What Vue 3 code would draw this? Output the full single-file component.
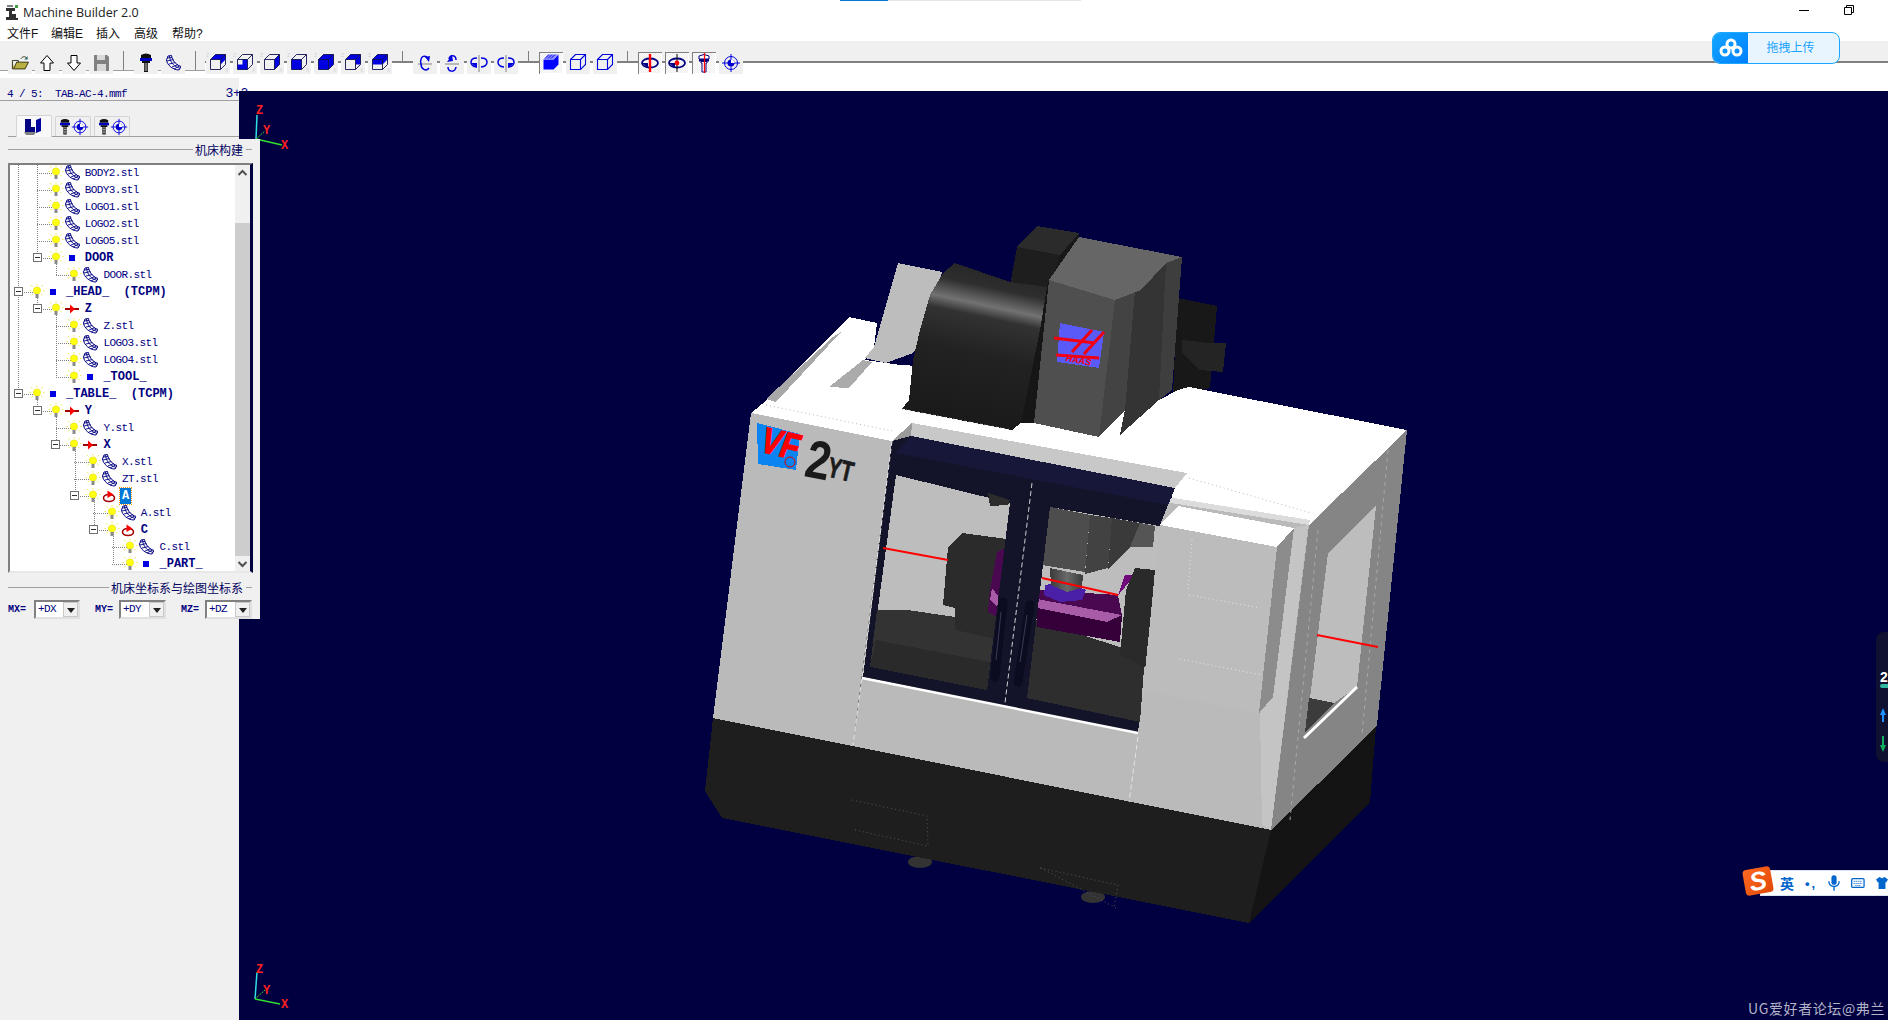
<template>
  <div class="app">
    <!-- shared icons -->
    <svg class="sprite" width="0" height="0">
      <symbol id="bulb" viewBox="0 0 16 16">
        <path d="M8 0v1.5M2 1l1.5 1.5M14 1l-1.5 1.5M.5 6.5H2M15.5 6.5H14M2.5 11l1.500-1M13.500 11L12 10" stroke="#f0e860" fill="none" />
        <circle cx="8" cy="6.500" r="3.600" fill="#ffff10" stroke="#e6d800" stroke-width=".6" />
        <rect x="6.500" y="10" width="3" height="4" fill="#8a8a8a" />
      </symbol>
      <symbol id="stl" viewBox="0 0 16 16">
        <path d="M3 1 6.500.5C7.500 6 11 10 16 11.500L14 15C8 15 2 10 1.500 5Z" fill="#fff" stroke="#000080" />
        <path d="M4.500 1C5 7 9 12 15 13.300M2 3 7 2.500M2 6 8.500 4.500M4 9 10.500 7.500M7 12 13 9.500M9 14 14.500 11" stroke="#000080" stroke-width=".9" fill="none" />
      </symbol>
      <symbol id="axis" viewBox="0 0 16 16">
        <path d="M1 8H15" stroke="#a00000" stroke-width="2" />
        <path d="M6 3.500 11 8 6 12.500Z" fill="#ff0000" />
      </symbol>
      <symbol id="rotary" viewBox="0 0 16 16">
        <ellipse cx="8" cy="10" rx="5.500" ry="3.500" fill="#fff" stroke="#a00000" stroke-width="1.600" />
        <path d="M6.500 2.500 12.500 6.500 6.500 10Z" fill="#ff0000" />
      </symbol>
      <symbol id="group" viewBox="0 0 16 16">
        <rect x="5" y="5" width="6" height="6" fill="#0000e0" />
      </symbol>

      <symbol id="open" viewBox="-2 -2 28 26">
        <path d="M3 8 3 18H18L22 10H8L5 17" fill="#b8b040" stroke="#202000" />
        <path d="M3 8H10V10M13 6C15 3 18 3 20 5" stroke="#202000" fill="none" />
        <path d="M21 3V7H17Z" fill="#206060" />
      </symbol>
      <symbol id="up" viewBox="0 0 24 22">
        <path d="M12 3.500 18.500 11H15V18.500H9V11H5.500Z" fill="#fff" stroke="#000" />
      </symbol>
      <symbol id="down" viewBox="0 0 24 22">
        <path d="M12 18.500 18.500 11H15V3.500H9V11H5.500Z" fill="#fff" stroke="#000" />
      </symbol>
      <symbol id="save" viewBox="0 0 24 22">
        <path d="M5 3H18L20 5V19H5Z" fill="#808080" />
        <rect x="8" y="3" width="8" height="5" fill="#d8d8d8" />
        <rect x="8" y="12" width="9" height="7" fill="#d8d8d8" />
      </symbol>
      <symbol id="tool" viewBox="0 0 24 22">
        <path d="M7 3Q12 0 17 3V6H7Z" fill="#101010" />
        <rect x="6" y="6" width="12" height="3" fill="#0000c0" />
        <path d="M8 9H16V11H14V20H10V11H8Z" fill="#101010" />
        <path d="M10.500 12H13.500M10.500 14H13.500M10.500 16H13.500M10.500 18H13.500" stroke="#fff" stroke-width=".8" />
      </symbol>
      <symbol id="target" viewBox="0 0 24 22">
        <circle cx="12" cy="11" r="6.500" fill="none" stroke="#0000e0" />
        <circle cx="12" cy="11" r="3.500" fill="#0000c0" />
        <path d="M12 2V20M3 11H21" stroke="#0000e0" />
        <path d="M12 7.500A3.500 3.500 0 0 1 15.500 11H12Z" fill="#fff" />
      </symbol>
      <symbol id="rot1" viewBox="0 0 24 22">
        <path d="M5 12H19" stroke="#808080" />
        <path d="M14 5C8 2 7 9 8 12 8 17 13 20 16 16" fill="none" stroke="#0000e0" stroke-width="1.500" />
        <path d="M12 5 17 4 16 10Z" fill="#0000e0" />
      </symbol>
      <symbol id="rot2" viewBox="0 0 24 22">
        <path d="M5 12H19" stroke="#808080" />
        <path d="M9 7C10 2 16 3 16 8M8 15C8 20 15 21 16 15" fill="none" stroke="#0000e0" stroke-width="1.500" />
        <path d="M12 3 7 10 13 9Z" fill="#0000e0" />
      </symbol>
      <symbol id="rot3" viewBox="0 0 24 22">
        <path d="M12 3V20" stroke="#808080" />
        <path d="M10 6C2 6 2 14 10 15M14 6C22 6 22 14 14 15" fill="none" stroke="#0000e0" stroke-width="1.500" />
        <path d="M4 11 10 11V16Z" fill="#0000e0" />
      </symbol>
      <symbol id="rot4" viewBox="0 0 24 22">
        <path d="M12 3V20" stroke="#808080" />
        <path d="M10 6C2 6 2 14 10 15M14 6C22 6 22 14 14 15" fill="none" stroke="#0000e0" stroke-width="1.500" />
        <path d="M20 11 14 11V16Z" fill="#0000e0" />
      </symbol>
      <symbol id="spin1" viewBox="0 0 24 22">
        <ellipse cx="12" cy="11" rx="8" ry="4.500" fill="none" stroke="#000080" stroke-width="1.800" />
        <path d="M4 11H10V16Z" fill="#000080" />
        <path d="M12 2V20" stroke="#ff0000" stroke-width="2.400" />
      </symbol>
      <symbol id="spin2" viewBox="0 0 24 22">
        <ellipse cx="12" cy="11" rx="8" ry="4.500" fill="none" stroke="#000080" stroke-width="1.800" />
        <path d="M4 11H10V16Z" fill="#000080" />
        <path d="M12 2V20" stroke="#000" />
        <circle cx="12" cy="11" r="2.400" fill="#ff0000" />
      </symbol>
      <symbol id="spin3" viewBox="0 0 24 22">
        <path d="M7 4Q12 1 17 4V7H7Z" fill="#fff" stroke="#000080" />
        <rect x="7" y="7" width="10" height="2.500" fill="#000080" />
        <path d="M9 9.500H15V11H14V20H10V11H9Z" fill="#fff" stroke="#000080" />
        <path d="M12.500 1V21" stroke="#ff0000" stroke-width="1.300" />
      </symbol>
      <symbol id="wire" viewBox="0 0 24 22">
        <path d="M4.500 7.500 9.500 2.500H19.500V12.500L14.500 17.500H4.500ZM4.500 7.500H14.500V17.500M14.500 7.500 19.500 2.500" fill="none" stroke="#0000e0" stroke-width="1.100" />
      </symbol>
      <symbol id="solid" viewBox="0 0 24 22">
        <path d="M4.500 7.500H14.500V17.500H4.500ZM14.500 7.500 19.500 2.500V12.500L14.500 17.500Z" fill="#0000ff" />
        <path d="M4.500 7.500 9.500 2.500H19.500L14.500 7.500Z" fill="#9090ff" />
        <path d="M6 6.500 10 2.500M9 6.500 13 2.500M12 6.500 16 2.500" stroke="#0000ff" />
      </symbol>
      <symbol v-for="c in cubes" :id="c.id" :key="c.id" viewBox="0 0 24 22">
        <path :d="c.fill" fill="#0000e0" />
        <path d="M4.500 7.500 9.500 2.500H19.500V12.500L14.500 17.500H4.500ZM4.500 7.500H14.500V17.500M14.500 7.500 19.500 2.500" fill="none" stroke="#101050" stroke-width=".9" />
      </symbol>
    </svg>

    <div class="progress"><span class="progress-on"></span></div>

    <header class="titlebar">
      <svg class="app-icon" viewBox="0 0 14 16" width="14" height="16">
        <path d="M1 4H10V7H7V10H11V14H13V16H1V13H4V7H1Z" fill="#303030" />
        <path d="M2 1H8V3H2Z" fill="#808080" />
        <rect x="10" y="1" width="3" height="3" fill="#40a040" />
      </svg>
      <span class="app-name">Machine Builder 2.0</span>
      <div class="winbtns">
        <svg width="12" height="12" viewBox="0 0 12 12"><path d="M1 6.500H11" stroke="#000" /></svg>
        <svg width="12" height="12" viewBox="0 0 12 12"><path d="M3.500 3V1.500H10.500V8.500H8.500M1.500 3.500H8.500V10.500H1.500Z" stroke="#000" fill="#fff" /></svg>
      </div>
    </header>

    <nav class="menubar">
      <span v-for="m in menus" :key="m">{{ m }}</span>
    </nav>

    <div class="toolbar">
      <template v-for="(b, i) in toolbar" :key="i">
        <span v-if="b === '|'" class="sep" :class="{ tall: i < 8 }"></span>
        <span v-else class="tbtn" :class="{ on: b.endsWith('!') }">
          <svg width="24" height="22">
            <use v-if="b === 'stl'" href="#stl" x="4" y="3" width="16" height="16" />
            <use v-else :href="'#' + b.replace('!', '')" />
            <template v-if="b.startsWith('cube')">
              <text x="0" y="5" class="mini">Z</text>
              <text x="19" y="20" class="mini">X</text>
            </template>
          </svg>
        </span>
      </template>
    </div>

    <div class="work">
      <aside class="side">
        <div class="status">
          <span>{{ statusText }}</span>
          <b class="mode">3+2</b>
        </div>
        <div class="tabs">
          <span class="tab active">
            <svg width="22" height="20" viewBox="0 0 22 20">
              <path d="M2 2H8V10H12V15H2Z" fill="#000080" />
              <path d="M13 3 18 1V14L13 16Z" fill="#0000a0" />
              <path d="M1 15H13L11 18H3Z" fill="#808080" />
            </svg>
          </span>
          <span v-for="n in 2" :key="n" class="tab">
            <svg class="tab-ico" width="20" height="20"><use href="#tool" /></svg>
            <svg class="tab-ico" width="22" height="20"><use href="#target" /></svg>
          </span>
        </div>

        <section class="panel">
          <div class="legend"><i></i><span>机床构建</span><i class="tail"></i></div>
          <div class="tree">
            <svg class="links" width="225" height="406" viewBox="10 165 225 406">
              <path :d="linkPath" fill="none" stroke="#808080" stroke-dasharray="1 1" shape-rendering="crispEdges" />
            </svg>
            <div class="rows">
              <div v-for="r in rows" :key="r.label" class="row" :class="{ bold: r.bold }" :style="{ marginLeft: (r.level * 18.7 - 1.2) + 'px' }">
                <span class="toggle"><i v-if="r.box"></i></span>
                <svg class="ico bulb" width="16" height="16"><use href="#bulb" /></svg>
                <svg class="ico" width="16" height="16"><use :href="'#' + r.icon" /></svg>
                <span class="label" :class="{ picked: r.picked }">{{ r.label }}</span>
              </div>
            </div>
            <div class="scroll">
              <span class="arrow first">
                <svg width="11" height="8" viewBox="0 0 11 8"><path d="M1.500 6 5.500 2 9.500 6" fill="none" stroke="#505050" stroke-width="2" /></svg>
              </span>
              <span class="thumb"></span>
              <span class="arrow">
                <svg width="11" height="8" viewBox="0 0 11 8"><path d="M1.500 2 5.500 6 9.500 2" fill="none" stroke="#505050" stroke-width="2" /></svg>
              </span>
            </div>
          </div>
          <div class="legend second"><i></i><span>机床坐标系与绘图坐标系</span><i class="tail"></i></div>
          <div class="combos">
            <template v-for="c in combos" :key="c.name">
              <label>{{ c.name }}</label>
              <div class="combo"><span>{{ c.value }}</span><b></b></div>
            </template>
          </div>
        </section>
      </aside>

      <main class="view">
        <svg class="scene" viewBox="239 91 1649 929" width="1649" height="929">
          <defs>
            <linearGradient id="encl" gradientUnits="userSpaceOnUse" x1="1000" y1="255" x2="965" y2="420">
              <stop offset="0" stop-color="#202020" />
              <stop offset=".2" stop-color="#2e2e2e" />
              <stop offset=".31" stop-color="#727272" />
              <stop offset=".38" stop-color="#323232" />
              <stop offset=".6" stop-color="#222222" />
              <stop offset="1" stop-color="#1a1a1a" />
            </linearGradient>
            <linearGradient id="spindle" gradientUnits="userSpaceOnUse" x1="1050" y1="0" x2="1084" y2="0">
              <stop offset="0" stop-color="#3a3a3a" />
              <stop offset=".5" stop-color="#6a6a6a" />
              <stop offset="1" stop-color="#383838" />
            </linearGradient>
          </defs>

          <g class="triad">
            <path d="M257 115 256 139" stroke="#30e0e0" stroke-width="1.500" />
            <path d="M256 139 282 145" stroke="#30e030" stroke-width="1.500" />
            <path d="M256 139 265 131" stroke="#30e030" stroke-dasharray="2 1" />
            <text x="256" y="114">Z</text><text x="263" y="134">Y</text><text x="281" y="149">X</text>
          </g>
          <g class="triad">
            <path d="M257 972 255 999" stroke="#30e0e0" stroke-width="1.500" />
            <path d="M255 999 280 1004" stroke="#30e030" stroke-width="1.500" />
            <path d="M255 999 265 990" stroke="#30e030" stroke-dasharray="2 1" />
            <text x="256" y="973">Z</text><text x="263" y="994">Y</text><text x="281" y="1008">X</text>
          </g>

          <ellipse cx="920" cy="862" rx="12" ry="6" fill="#333" />
          <ellipse cx="1093" cy="897" rx="12" ry="6" fill="#333" />

          <polygon v-for="(f, i) in faces" :key="i" :points="f[0]" :fill="f[1]" shape-rendering="crispEdges" />

          <!-- door handles and seams -->
          <path d="M1003 602 995 677M1030 605 1018 682" stroke="#0c0c20" stroke-width="9" stroke-linecap="round" fill="none" />
          <path d="M1001 612 996 660M1027 615 1020 662" stroke="#3a3a58" fill="none" />
          <path d="M1032 483 1005 703" stroke="#d0d0d0" stroke-dasharray="5 3" />
          <path d="M892 441 862 678 853 745M1138 737 1129 802" stroke="#e4e4e4" stroke-dasharray="5 3" />
          <path d="M862 678 1138 733" stroke="#fff" stroke-width="2.500" />
          <path d="M1304 738 1357 687" stroke="#fff" stroke-width="3" />

          <!-- dotted panel lines -->
          <g fill="none" stroke="#b8b8b8" stroke-dasharray="1 3">
            <path d="M766 405 892 431M902 409 1012 430M1189 478 1311 513" />
            <path d="M1189 595 1260 608M1180 659 1262 675M1192 540 1188 590" stroke="#e8e8e8" />
            <path d="M1318 530 1290 820M1388 450 1362 735" stroke="#a8a8a8" stroke-dasharray="4 4" />
            <path d="M852 800 927 816 928 845M855 830 928 846M1040 868 1118 885 1114 908M1041 868 1116 908" stroke="#555" />
          </g>
          <path d="M883 548 948 560M1042 578 1118 595M1317 635 1378 647" stroke="#ff0000" stroke-width="2" />

          <!-- machine decals -->
          <polygon points="757,423 800,434 796,470 758,464" fill="#0a84f0" shape-rendering="crispEdges" />
          <text class="decal" transform="translate(758 451) rotate(13) skewX(-8) scale(.82 1)" font-size="36" fill="#ff0000" stroke="#ff0000" stroke-width="1.400">VF</text>
          <circle cx="790" cy="462" r="5" fill="none" stroke="#e00000" />
          <text class="decal" transform="translate(803 476) rotate(11) scale(.82 1)" font-size="54" fill="#1a1a1a">2</text>
          <text class="decal" transform="translate(826 476) rotate(13) scale(.72 1)" font-size="28" fill="#1a1a1a" stroke="#1a1a1a" stroke-width=".8">YT</text>
          <polygon points="1060,323 1104,332 1099,368 1057,362" fill="#5a5af8" shape-rendering="crispEdges" />
          <path d="M1054 338 1095 343M1092 330 1072 352M1104 332 1084 354M1056 355 1099 358" stroke="#f00010" stroke-width="3" fill="none" />
          <text class="decal" transform="translate(1065 361) rotate(10) skewX(-10)" font-size="9" fill="#f00010">HAAS</text>
        </svg>
      </main>
    </div>

    <div class="netdisk">
      <span class="nd-icon">
        <svg width="24" height="20" viewBox="0 0 24 20" fill="none" stroke="#fff" stroke-width="3">
          <circle cx="12" cy="6" r="4" /><circle cx="6" cy="13" r="4" /><circle cx="18" cy="13" r="4" />
        </svg>
      </span>
      <span class="nd-text">拖拽上传</span>
    </div>

    <div class="meter">
      <b>2</b><i></i>
      <svg width="6" height="60" viewBox="0 0 6 60">
        <path d="M3 2 6 9H4V16H2V9H0Z" fill="#1e90ff" />
        <path d="M3 46 6 39H4V30H2V39H0Z" fill="#10b060" />
      </svg>
    </div>

    <div class="ime">
      <span class="ime-logo">S</span>
      <b class="ime-word">英</b>
      <span class="ime-punct">•,</span>
      <svg width="14" height="18" viewBox="0 0 14 18" fill="#0066cc">
        <rect x="4" y="0" width="6" height="11" rx="3" />
        <path d="M1 7C1 15 13 15 13 7M7 13V18" fill="none" stroke="#0066cc" stroke-width="1.600" />
      </svg>
      <svg width="16" height="12" viewBox="0 0 16 12">
        <rect x=".8" y=".8" width="14.400" height="10.400" rx="1.500" fill="#fff" stroke="#0066cc" stroke-width="1.500" />
        <path d="M3 4H13M3 6.500H13M5 9H11" stroke="#0066cc" stroke-dasharray="1.500 .8" />
      </svg>
      <svg width="14" height="14" viewBox="0 0 14 14"><path d="M4 0 7 1.500 10 0 14 3 12 6H11V14H3V6H2L0 3Z" fill="#0066cc" /></svg>
    </div>

    <div class="watermark">UG爱好者论坛@弗兰</div>
  </div>
</template>

<script setup>
import { computed } from 'vue'

const menus = ['文件F', '编辑E', '插入', '高级', '帮助?']
const statusText = '4 / 5:  TAB-AC-4.mmf'

const cubes = [
  { id: 'cube1', fill: 'M9.500 2.500H19.500V7.500L14.500 12.500V7.500H4.500Z' },
  { id: 'cube2', fill: 'M4.500 12.500H9.500V7.500H14.500V17.500H4.500Z' },
  { id: 'cube3', fill: 'M14.500 7.500 19.500 2.500V12.500L14.500 17.500Z' },
  { id: 'cube4', fill: 'M4.500 7.500H14.500V17.500H4.500Z' },
  { id: 'cube5', fill: 'M4.500 7.500 9.500 2.500H19.500V12.500L14.500 17.500H4.500Z' },
  { id: 'cube6', fill: 'M4.500 7.500 9.500 2.500H19.500V12.500H14.500V7.500H4.500Z' },
  { id: 'cube7', fill: 'M4.500 7.500 9.500 2.500H19.500V7.500L14.500 12.500H4.500Z' }
]

const toolbar = [
  'open', 'up', 'down', 'save', '|', 'tool', 'stl', '|',
  'cube1', 'cube2', 'cube3', 'cube4', 'cube5', 'cube6', 'cube7', '|',
  'rot1', 'rot2', 'rot3', 'rot4', '|',
  'solid!', 'wire', 'wire', '|',
  'spin1!', 'spin2!', 'spin3!', 'target'
]

const rows = [
  { level: 1, icon: 'stl', label: 'BODY2.stl' },
  { level: 1, icon: 'stl', label: 'BODY3.stl' },
  { level: 1, icon: 'stl', label: 'LOGO1.stl' },
  { level: 1, icon: 'stl', label: 'LOGO2.stl' },
  { level: 1, icon: 'stl', label: 'LOGO5.stl' },
  { level: 1, icon: 'group', label: 'DOOR', bold: true, box: true },
  { level: 2, icon: 'stl', label: 'DOOR.stl' },
  { level: 0, icon: 'group', label: '_HEAD_  (TCPM)', bold: true, box: true },
  { level: 1, icon: 'axis', label: 'Z', bold: true, box: true },
  { level: 2, icon: 'stl', label: 'Z.stl' },
  { level: 2, icon: 'stl', label: 'LOGO3.stl' },
  { level: 2, icon: 'stl', label: 'LOGO4.stl' },
  { level: 2, icon: 'group', label: '_TOOL_', bold: true },
  { level: 0, icon: 'group', label: '_TABLE_  (TCPM)', bold: true, box: true },
  { level: 1, icon: 'axis', label: 'Y', bold: true, box: true },
  { level: 2, icon: 'stl', label: 'Y.stl' },
  { level: 2, icon: 'axis', label: 'X', bold: true, box: true },
  { level: 3, icon: 'stl', label: 'X.stl' },
  { level: 3, icon: 'stl', label: 'ZT.stl' },
  { level: 3, icon: 'rotary', label: 'A', bold: true, box: true, picked: true },
  { level: 4, icon: 'stl', label: 'A.stl' },
  { level: 4, icon: 'rotary', label: 'C', bold: true, box: true },
  { level: 5, icon: 'stl', label: 'C.stl' },
  { level: 5, icon: 'group', label: '_PART_', bold: true }
]

const combos = [
  { name: 'MX=', value: '+DX' },
  { name: 'MY=', value: '+DY' },
  { name: 'MZ=', value: '+DZ' }
]

// dotted tree connectors, in page coordinates
const linkPath = computed(() => {
  const verticals = [
    [18.5, 165, 394], [37, 165, 258], [37, 292, 309], [56, 258, 275], [56, 309, 377],
    [37, 394, 411], [56, 411, 445], [75, 445, 496], [94, 496, 530], [113, 530, 564]
  ]
  let d = verticals.map(([x, a, b]) => `M${x} ${a}V${b}`).join('')
  rows.forEach((r, i) => {
    const y = 173 + i * 17
    const x = 37 + r.level * 18.7
    d += `M${x - 18.7} ${y}H${x}`
  })
  return d
})

// painted back to front, page coordinates
const faces = [
  // base
  ['713,718 1271,830 1249,923 722,818 705,791', '#1e1e1e'],
  ['1271,830 1376,727 1370,802 1249,923', '#141414'],
  // rear box and knob
  ['1177,298 1217,306 1210,388 1173,397', '#181818'],
  ['1182,340 1210,343 1226,343 1223,372 1200,370 1182,353', '#242424'],
  // motor box
  ['1037,226 1079,233 1060,255 1017,247', '#2b2b2b'],
  ['1017,247 1060,255 1053,277 1045,290 1010,285', '#1e1e1e'],
  ['1079,233 1079,255 1053,277 1060,255', '#181818'],
  // top plates
  ['751,413 767,400 849,317 877,323 874,347 865,360 900,365 1000,370 1100,400 1159,400 1178,390 1189,387 1407,430 1309,525 892,441', '#ffffff'],
  ['766,399 833,337 841,332 776,402', '#a8a8a8'],
  ['863,360 872,362 849,388 829,387', '#ababab'],
  // fin and way cover
  ['898,263 942,272 920,345 913,353 886,363 865,358 874,347', '#bdbdbd'],
  ['1047,287 1049,280 1034,423 1021,423', '#161616'],
  ['955,263 943,273 930,295 920,330 913,360 909,400 902,409 1012,430 1021,423 1040,330 1047,287 1010,282', 'url(#encl)'],
  // head column
  ['1115,300 1135,290 1125,410 1099,437', '#434343'],
  ['1135,290 1166,263 1159,400 1120,435 1125,410', '#343434'],
  ['1166,263 1182,257 1172,390 1159,400', '#3e3e3e'],
  ['1079,237 1182,257 1166,263 1141,290 1115,300 1049,280', '#666666'],
  ['1049,280 1115,300 1099,437 1034,423', '#4f4f4f'],
  ['1159,400 1178,390 1189,387 1300,420 1200,470 1111,445 1120,435', '#ffffff'],
  // front and right skins
  ['751,413 892,441 1165,500 1309,525 1271,830 713,718', '#bababa'],
  ['1309,525 1407,430 1377,725 1363,740 1271,830', '#858585'],
  ['1376,506 1328,553 1310,698 1334,703 1357,687', '#bdbdbd'],
  ['1309,698 1334,703 1305,732', '#3c3c3c'],
  ['892,441 912,423 911,437', '#9a9a9a'],
  ['912,423 1187,473 1175,488 911,437', '#c8c8c8'],
  ['1168,497 1310,520 1309,525 1165,502', '#dcdcdc'],
  // door
  ['911,436 1175,488 1160,525 1138,733 863,677 892,441', '#13132a'],
  ['911,436 1175,488 1168,505 896,453', '#17173a'],
  // left window
  ['896,475 1010,503 987,690 870,667', '#bdbdbd'],
  ['877,610 908,610 955,617 1006,637 987,690 870,667', '#333333'],
  ['876,640 990,662 987,690 870,667', '#2a2a2a'],
  ['988,493 1010,500 1008,505 990,506', '#2c2c2c'],
  ['962,533 1007,539 1000,640 955,630 955,608 943,605 948,547', '#2b2b2b'],
  ['1005,548 997,552 990,590 988,612 1005,622', '#4a0850'],
  ['992,588 999,597 1000,610 990,600', '#a85ca8'],
  // right window
  ['1050,507 1165,527 1140,722 1027,698', '#bdbdbd'],
  ['1035,620 1145,655 1140,722 1027,698', '#2e2e2e'],
  ['1037,590 1118,595 1122,615 1037,599', '#4a0850'],
  ['1037,608 1107,622 1122,615 1120,642 1037,627', '#35003a'],
  ['1037,599 1122,615 1107,622 1037,608', '#a85ca8'],
  ['1125,575 1135,575 1120,593 1118,595', '#700a78'],
  ['1045,585 1062,582 1086,590 1082,600 1060,602 1044,595', '#4a20a8'],
  ['1050,568 1083,575 1082,588 1067,592 1051,585', 'url(#spindle)'],
  ['1135,568 1155,570 1146,668 1120,655 1126,590', '#2a2a2a'],
  ['1050,507 1090,515 1085,572 1042,565', '#4d4d4d'],
  ['1090,515 1112,518 1108,568 1085,574', '#424242'],
  ['1112,518 1140,523 1130,547 1108,570', '#3a3a3a'],
  ['1140,523 1155,526 1153,547 1130,547', '#555555'],
  // centre door post
  ['1010,503 1050,507 1027,698 987,690', '#13132a'],
  // right pillar
  ['1178,506 1294,528 1277,547 1160,525', '#ffffff'],
  ['1160,525 1277,547 1259,713 1143,690', '#bcbcbc'],
  ['1277,547 1294,528 1277,697 1259,713', '#8c8c8c'],
  ['1294,528 1308,525 1271,830 1262,825 1260,712 1273,697', '#c4c4c4']
]
</script>

<style scoped>
.app {
  position: relative;
  width: 1888px;
  height: 1020px;
  overflow: hidden;
  background: #fff;
  font-family: "Liberation Sans", "Noto Sans CJK SC", sans-serif;
  color: #111;
}
.sprite {
  position: absolute;
}
.mini {
  font: 5px "Liberation Sans", sans-serif;
  fill: #d0d0d0;
}

.progress {
  position: absolute;
  left: 840px;
  top: 0;
  width: 241px;
  height: 1px;
  background: #e6e6e6;
}
.progress-on {
  display: block;
  width: 48px;
  height: 1px;
  background: #0078d7;
}

.titlebar {
  display: flex;
  align-items: center;
  height: 24px;
  padding-left: 5px;
}
.app-icon {
  margin-right: 4px;
}
.app-name {
  font-size: 12.5px;
  color: #222;
  font-family: "Open Sans", "Liberation Sans", sans-serif;
}
.winbtns {
  display: flex;
  gap: 33px;
  margin-left: auto;
  padding-right: 33px;
  margin-top: -4px;
}

.menubar {
  display: flex;
  align-items: center;
  height: 17px;
  padding-left: 7px;
  font-size: 12px;
  color: #111;
}
.menubar span:nth-child(1) { width: 44px; }
.menubar span:nth-child(2) { width: 45px; }
.menubar span:nth-child(3) { width: 38px; }
.menubar span:nth-child(4) { width: 38px; }

.toolbar {
  position: relative;
  display: flex;
  align-items: flex-start;
  height: 37px;
  padding: 11px 0 0 6.5px;
  background:
    linear-gradient(#f0f0f0, #f0f0f0) 0 0 / 205px 29px no-repeat,
    linear-gradient(#f0f0f0, #f0f0f0) 0 0 / 100% 20px no-repeat,
    #fff;
  box-sizing: border-box;
}
.toolbar::before {
  content: "";
  position: absolute;
  left: 205px;
  right: 0;
  top: 20px;
  height: 2px;
  background: #808080;
}
.toolbar::after {
  content: "";
  position: absolute;
  left: 0;
  width: 205px;
  top: 29px;
  height: 1px;
  background: #a0a0a0;
}
.tbtn {
  position: relative;
  z-index: 1;
  width: 24px;
  height: 22px;
  margin: 0 1.5px;
  background: #f0f0f0;
}
.tbtn.on {
  box-shadow: inset 1px 1px 0 #808080, inset -1px -1px 0 #fff;
  background: repeating-conic-gradient(#fff 0 25%, #ececec 0 50%) 0 0 / 2px 2px;
}
.sep {
  position: relative;
  width: 18px;
  height: 22px;
}
.sep::after {
  content: "";
  position: absolute;
  left: 8px;
  top: -1px;
  width: 1px;
  height: 10px;
  background: #808080;
}
.sep.tall::after {
  height: 19px;
}

.work {
  display: flex;
  height: 942px;
}
.side {
  width: 239px;
  flex: none;
  background: #f0f0f0;
}
.status {
  display: flex;
  justify-content: space-between;
  box-sizing: border-box;
  width: 248px;
  height: 22px;
  padding: 11px 0 0 7px;
  font: 11px/10px "Liberation Mono", monospace;
  letter-spacing: -0.6px;
  white-space: pre;
  color: #000080;
}
.mode {
  font-size: 13px;
  font-weight: normal;
  line-height: 10px;
  letter-spacing: -0.3px;
}
.tabs {
  display: flex;
  align-items: flex-end;
  gap: 3px;
  box-sizing: border-box;
  height: 39px;
  padding: 0 0 2px 16px;
  border-top: 1px solid #a0a0a0;
  background: linear-gradient(#a0a0a0, #a0a0a0) 8px 35px / 231px 1px no-repeat;
}
.tab {
  display: flex;
  align-items: center;
  justify-content: center;
  height: 20px;
  padding: 0 2px;
  box-sizing: border-box;
  min-width: 36px;
  border: 1px solid #d4d4d4;
  border-bottom: none;
  border-radius: 2px 2px 0 0;
  position: relative;
  top: -1px;
}
.tab.active {
  background: #f8f8f8;
  height: 22px;
  top: 0;
}
.tab-ico {
  flex: none;
  margin: 0 -3px;
}

.panel {
  position: relative;
  z-index: 2;
  width: 260px;
  height: 480px;
  background: #f0f0f0;
}
.legend {
  display: flex;
  align-items: center;
  box-sizing: border-box;
  height: 24px;
  padding: 0 8px 4px;
  font-size: 12px;
  color: #000060;
}
.legend i {
  flex: 1;
  height: 1px;
  background: #a0a0a0;
  margin-right: 2px;
}
.legend .tail {
  flex: none;
  width: 6px;
  margin: 0 0 0 3px;
}
.legend.second {
  height: 27px;
  padding: 2px 8px 0;
}

.tree {
  position: relative;
  box-sizing: border-box;
  width: 245px;
  height: 410px;
  margin-left: 8px;
  background: #fff;
  border: 2px solid #808080;
  border-right: 3px solid #000040;
  border-bottom-color: #e8e8e8;
  overflow: hidden;
}
.links {
  position: absolute;
  left: 0;
  top: 0;
}
.rows {
  position: relative;
  margin-top: -1px;
}
.row {
  display: flex;
  align-items: center;
  height: 17px;
  white-space: pre;
  font: 11px "Liberation Mono", monospace;
  letter-spacing: -0.6px;
  color: #000080;
}
.row.bold {
  font-size: 12px;
  font-weight: 700;
  letter-spacing: 0;
}
.toggle {
  display: flex;
  align-items: center;
  justify-content: center;
  flex: none;
  width: 19px;
}
.toggle i {
  box-sizing: border-box;
  width: 9px;
  height: 9px;
  border: 1px solid #707070;
  background: linear-gradient(#303030, #303030) center / 5px 1px no-repeat #fff;
}
.ico {
  flex: none;
}
.bulb {
  margin-left: 1.2px;
}
.label {
  margin-left: 5px;
}
.label.picked {
  background: #0078d7;
  color: #fff;
  outline: 1px dotted #ff9000;
  padding: 1px 2px;
  margin-left: 3px;
}
.scroll {
  position: absolute;
  right: 0;
  top: 0;
  bottom: 0;
  width: 15px;
  display: flex;
  flex-direction: column;
  background: #f0f0f0;
}
.arrow {
  display: flex;
  align-items: center;
  justify-content: center;
  flex: none;
  height: 15px;
}
.arrow.first {
  height: 58px;
  align-items: flex-start;
  padding-top: 4px;
  box-sizing: border-box;
}
.thumb {
  flex: 1;
  background: #cdcdcd;
}

.combos {
  display: grid;
  grid-template-columns: 26px 46px 39px 47px 39px 47px;
  align-items: center;
  height: 19px;
  padding-left: 8px;
}
.combos label {
  font: 700 10px "Liberation Mono", monospace;
  color: #000080;
}
.combos label:not(:first-child) {
  justify-self: end;
  margin-right: 6px;
}
.combo {
  position: relative;
  box-sizing: border-box;
  height: 19px;
  padding-left: 2px;
  background: #fff;
  border: 2px solid #808080;
  border-right-color: #e0e0e0;
  border-bottom-color: #e0e0e0;
  font: 11px/15px "Liberation Mono", monospace;
  letter-spacing: -0.6px;
  color: #000080;
}
.combo b {
  position: absolute;
  right: 0;
  top: 0;
  bottom: 0;
  width: 15px;
  background: #f0f0f0;
  border: 1px solid #c8c8c8;
  box-sizing: border-box;
}
.combo b::after {
  content: "";
  position: absolute;
  left: 3px;
  top: 5px;
  border: 4px solid transparent;
  border-top: 5px solid #202020;
}

.view {
  position: relative;
  z-index: 1;
  flex: 1;
  margin-top: 13px;
  background: #000040;
  overflow: hidden;
}
.scene {
  display: block;
}
.triad {
  fill: none;
}
.triad text {
  font: 700 12px "Liberation Mono", monospace;
  fill: #ff2020;
}
.decal {
  font-family: "Liberation Sans", sans-serif;
  font-weight: 700;
}

.netdisk {
  position: absolute;
  left: 1712px;
  top: 32px;
  z-index: 3;
  display: flex;
  box-sizing: border-box;
  width: 128px;
  height: 32px;
  border: 1px solid #1ea7ff;
  border-radius: 8px;
  overflow: hidden;
  background: #e8f5ff;
}
.nd-icon {
  display: flex;
  align-items: center;
  justify-content: center;
  width: 35px;
  background: linear-gradient(135deg, #12a5ff, #0080ff);
}
.nd-text {
  flex: 1;
  padding-right: 6px;
  text-align: center;
  font-size: 12px;
  line-height: 30px;
  color: #19a3ff;
}

.meter {
  position: absolute;
  left: 1876px;
  top: 632px;
  z-index: 3;
  box-sizing: border-box;
  width: 30px;
  height: 130px;
  padding: 38px 0 0 4px;
  border-radius: 8px 0 0 8px;
  background: #101030;
  color: #fff;
}
.meter b {
  display: block;
  height: 14px;
  font-size: 14px;
  line-height: 14px;
}
.meter i {
  display: block;
  width: 12px;
  height: 4px;
  margin-bottom: 18px;
  border-radius: 2px;
  background: #30b8a0;
}
.meter svg {
  display: block;
  margin-top: 2px;
}

.ime {
  position: absolute;
  left: 1760px;
  top: 870px;
  z-index: 3;
  display: flex;
  align-items: center;
  gap: 11px;
  box-sizing: border-box;
  width: 128px;
  height: 26px;
  padding-left: 19px;
  background: #fff;
  border: 1px solid #d8e4f4;
  border-right: none;
}
.ime-logo {
  position: absolute;
  left: -17px;
  top: -3px;
  width: 28px;
  height: 26px;
  border-radius: 4px;
  background: linear-gradient(135deg, #ff6a20, #e04808);
  transform: rotate(-10deg);
  font: italic 700 26px/26px "Liberation Sans", sans-serif;
  text-align: center;
  color: #fff;
}
.ime-word {
  font-size: 14px;
  color: #0066cc;
}
.ime-punct {
  font: 700 13px "Liberation Sans", sans-serif;
  color: #0066cc;
  letter-spacing: 2px;
}

.watermark {
  position: absolute;
  left: 1748px;
  top: 1000px;
  z-index: 3;
  font: 14px/17px "Noto Sans CJK SC", sans-serif;
  letter-spacing: 0.6px;
  color: #b4b4c8;
}
</style>
